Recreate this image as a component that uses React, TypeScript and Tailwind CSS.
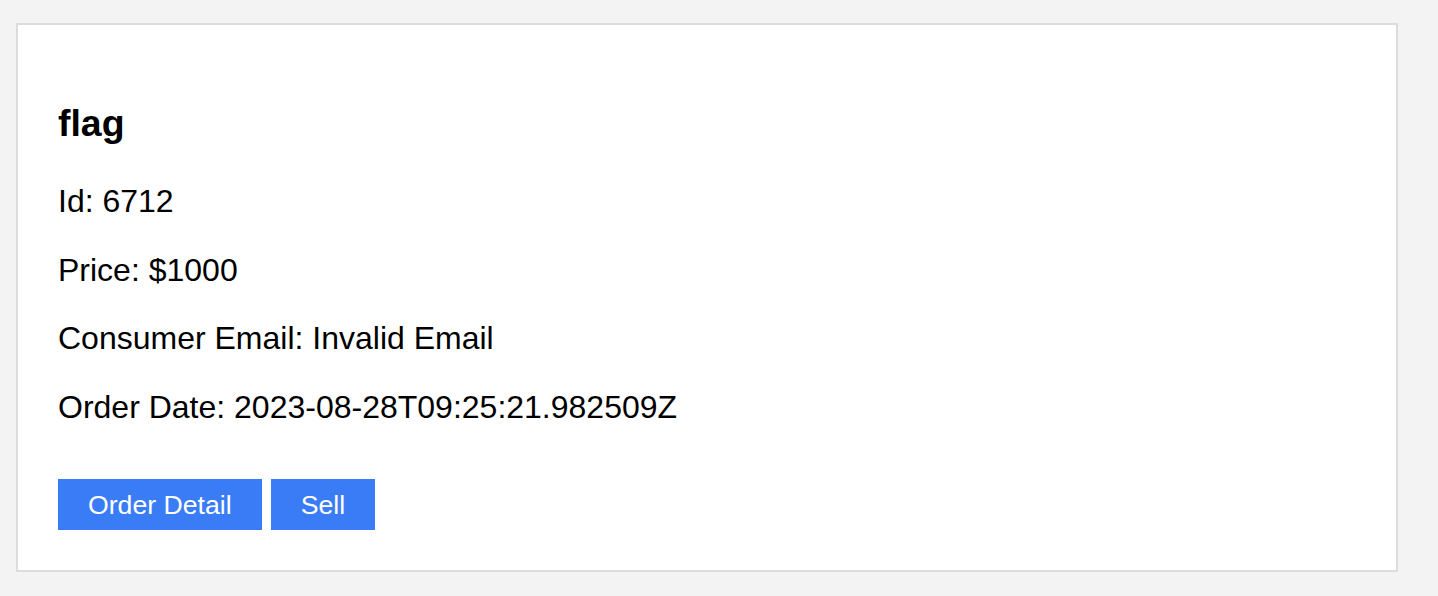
const order = {
  name: "flag",
  id: 6712,
  price: 1000,
  email: "Invalid Email",
  date: "2023-08-28T09:25:21.982509Z",
};

export default function App() {
  return (
    <div className="min-h-screen bg-[#f3f3f3] pl-4 pt-[23px] font-['Liberation_Sans',Arial,sans-serif] text-black">
      <div className="w-[1382px] border-2 border-[#dcdcdc] bg-white p-10">
        <h3 className="my-[37.44px] text-[37.44px] leading-[43px] font-bold">{order.name}</h3>
        <div className="flex flex-col gap-8 text-[32px] leading-[36.8px]">
          <p>Id: {order.id}</p>
          <p>Price: ${order.price}</p>
          <p>Consumer Email: {order.email}</p>
          <p>Order Date: {order.date}</p>
        </div>
        <div className="mt-[53px] flex gap-[9px]">
          <button className="h-[51px] bg-[#3a7cf6] px-[30px] text-[26.67px] text-white">Order Detail</button>
          <button className="h-[51px] bg-[#3a7cf6] px-[30px] text-[26.67px] text-white">Sell</button>
        </div>
      </div>
    </div>
  );
}
